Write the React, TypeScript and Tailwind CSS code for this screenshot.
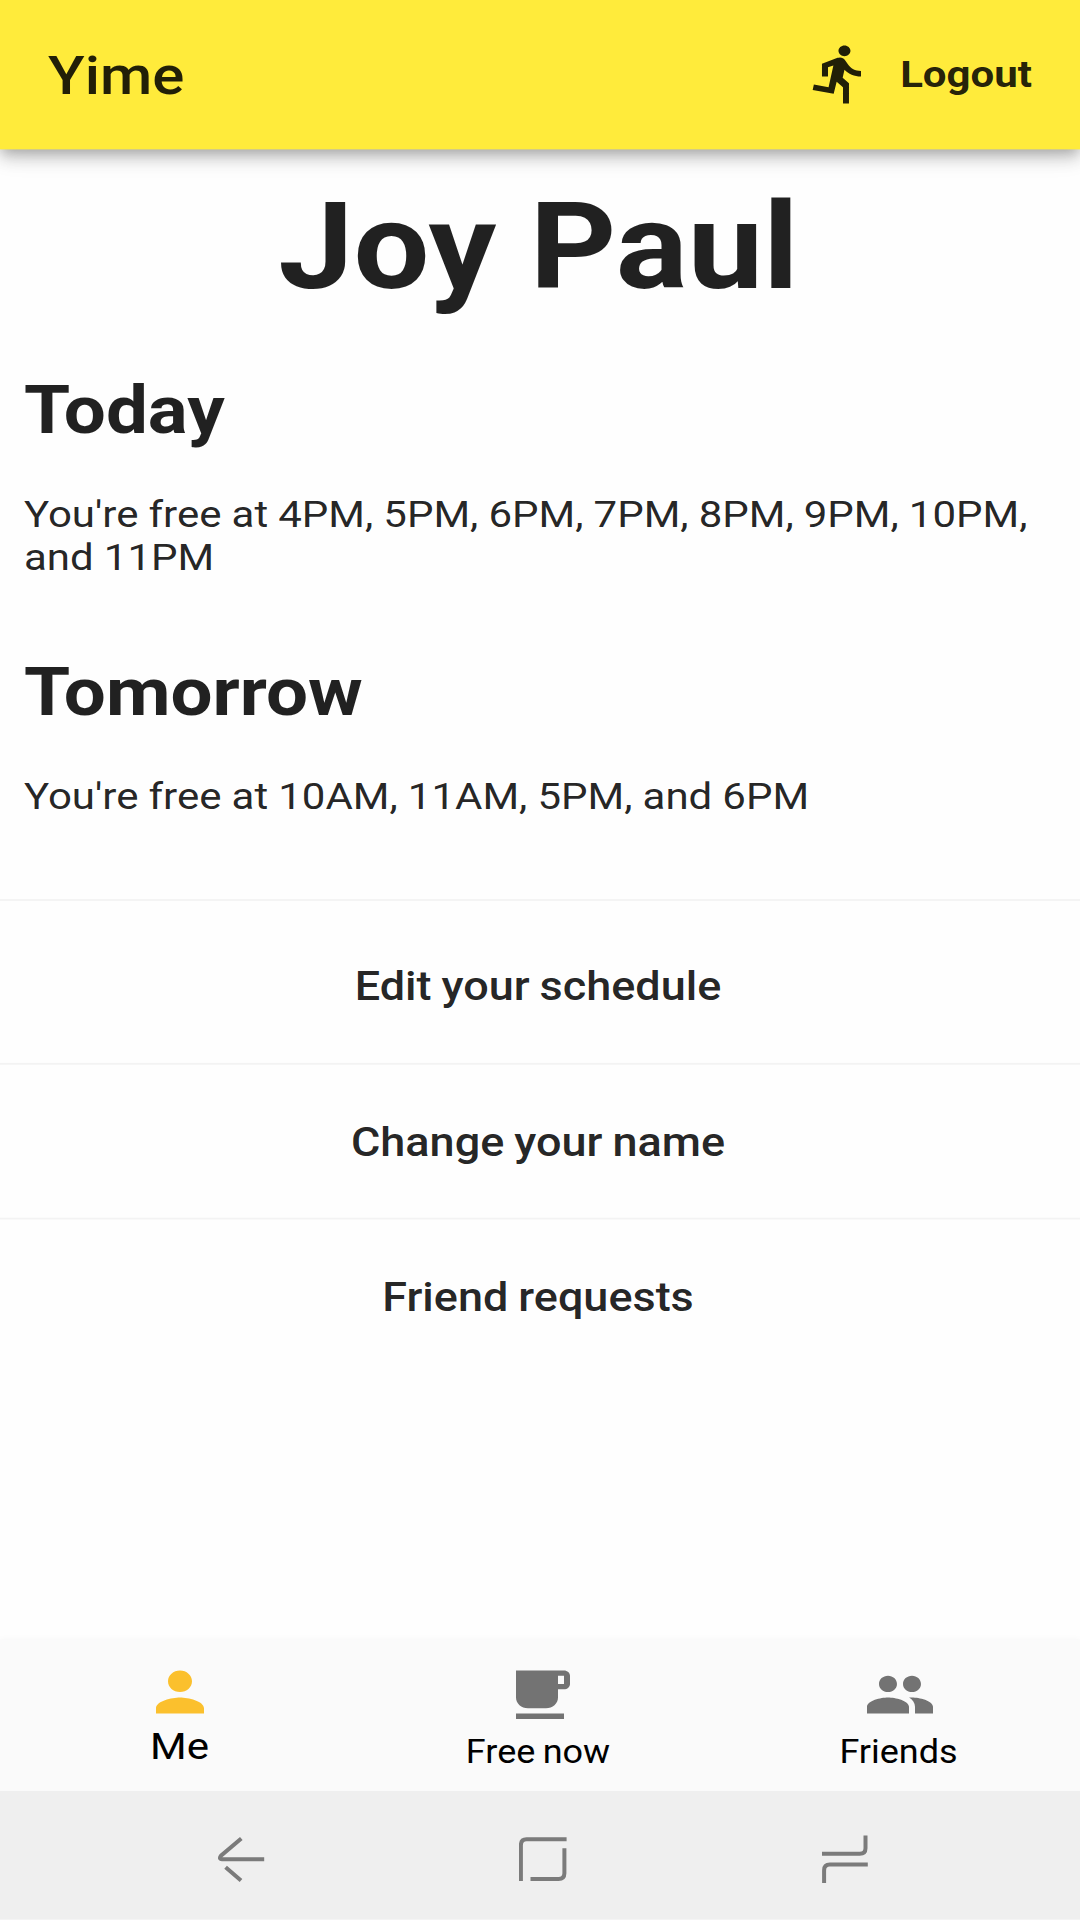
import type { ReactNode } from 'react';

function MaterialIcon({ d, className }: { d: string; className: string }) {
  return (
    <svg viewBox="0 0 24 24" fill="currentColor" className={className}>
      <path d={d} />
    </svg>
  );
}

const RUN =
  'M13.49 5.48c1.1 0 2-.9 2-2s-.9-2-2-2-2 .9-2 2 .9 2 2 2zm-3.6 13.9l1-4.4 2.1 2v6h2v-7.5l-2.1-2 .6-3c1.3 1.5 3.3 2.5 5.5 2.5v-2c-1.9 0-3.5-1-4.3-2.4l-1-1.6c-.4-.6-1-1-1.7-1-.3 0-.5.1-.8.1l-5.2 2.2v4.7h2v-3.4l1.8-.7-1.6 8.1-4.9-1-.4 2 7 1.4z';
const PERSON =
  'M12 12c2.21 0 4-1.79 4-4s-1.79-4-4-4-4 1.79-4 4 1.79 4 4 4zm0 2c-2.67 0-8 1.34-8 4v2h16v-2c0-2.66-5.33-4-8-4z';
const CUP =
  'M20 3H4v10c0 2.21 1.79 4 4 4h6c2.21 0 4-1.79 4-4v-3h2c1.11 0 2-.89 2-2V5c0-1.11-.89-2-2-2zm0 5h-2V5h2v3zM4 19h16v2H4z';
const PEOPLE =
  'M16 11c1.66 0 2.99-1.34 2.99-3S17.66 5 16 5c-1.66 0-3 1.34-3 3s1.34 3 3 3zm-8 0c1.66 0 2.99-1.34 2.99-3S9.66 5 8 5C6.34 5 5 6.34 5 8s1.34 3 3 3zm0 2c-2.33 0-7 1.17-7 3.5V19h14v-2.5c0-2.33-4.67-3.5-7-3.5zm8 0c-.29 0-.62.02-.97.05 1.16.84 1.97 1.97 1.97 3.45V19h6v-2.5c0-2.33-4.67-3.5-7-3.5z';

function SystemButton({ label, children }: { label: string; children: ReactNode }) {
  return (
    <button aria-label={label} className="h-[55.56px] w-[50px]">
      <svg
        viewBox="0 0 50 50"
        preserveAspectRatio="none"
        fill="none"
        stroke="currentColor"
        strokeWidth="4"
        className="h-full w-full"
      >
        {children}
      </svg>
    </button>
  );
}

function DayHeading({ children }: { children: ReactNode }) {
  return <h2 className="text-[74.5px] leading-[88px] font-bold">{children}</h2>;
}

function Availability({ children }: { children: ReactNode }) {
  return <p className="mt-[47.4px] text-[42px] leading-[47.6px] [word-spacing:-0.35px]">{children}</p>;
}

function Action({ label }: { label: string }) {
  return (
    <li className="flex h-[172.9px] items-center justify-center border-b-[2px] border-[#f3f3f3] pt-[1px] pr-[4px] text-[45px] font-medium [word-spacing:-1.2px] last:border-transparent">
      {label}
    </li>
  );
}

export default function App() {
  return (
    <div className="h-[1920px] w-[1080px] overflow-hidden bg-[#fefefe]">
      {/* The screen is laid out at 3x density and compressed vertically to fit the window. */}
      <div className="flex h-[2133.33px] w-[1080px] origin-top scale-y-[0.9] flex-col font-[Roboto,sans-serif] text-black/87">
        <header className="flex h-[165.6px] shrink-0 items-center justify-between bg-[#ffeb3b] px-12 shadow-[0_6px_12px_-3px_rgba(0,0,0,0.2),0_12px_15px_0_rgba(0,0,0,0.14),0_3px_30px_0_rgba(0,0,0,0.12)]">
          <span className="pt-[2px] text-[60px] font-medium">Yime</span>
          <button className="flex items-center gap-6 text-[42px] font-bold">
            <MaterialIcon d={RUN} className="-mt-[2px] size-[72px]" />
            Logout
          </button>
        </header>

        <main className="flex-1">
          <section className="px-6">
            <h1 className="mt-[28.8px] pr-[3px] text-center text-[134.6px] leading-[160px] font-bold">Joy Paul</h1>
            <div className="mt-[57.8px]">
              <DayHeading>Today</DayHeading>
              <Availability>You're free at 4PM, 5PM, 6PM, 7PM, 8PM, 9PM, 10PM, and 11PM</Availability>
            </div>
            <div className="mt-[82.4px]">
              <DayHeading>Tomorrow</DayHeading>
              <Availability>You're free at 10AM, 11AM, 5PM, and 6PM</Availability>
            </div>
          </section>
          <ul className="mt-[90.8px] border-t-[2px] border-[#f3f3f3] pt-[8.7px]">
            <Action label="Edit your schedule" />
            <Action label="Change your name" />
            <Action label="Friend requests" />
          </ul>
        </main>

        <nav className="grid h-[168.2px] shrink-0 grid-cols-3 bg-[#fafafa] text-black shadow-[0_0_8px_rgba(0,0,0,0.045)]">
          <a className="flex flex-col items-center pt-[21.4px]">
            <MaterialIcon d={PERSON} className="size-[72px] text-[#fbc02d]" />
            <span className="pr-[1px] text-[42px] leading-[48px]">Me</span>
          </a>
          <a className="flex flex-col items-center pt-[24.7px]">
            <MaterialIcon d={CUP} className="size-[72px] text-[#737373]" />
            <span className="mt-[6.7px] pr-[4px] text-[36px] leading-[42px] [word-spacing:-1.6px]">Free now</span>
          </a>
          <a className="flex flex-col items-center pt-[24.7px]">
            <MaterialIcon d={PEOPLE} className="size-[72px] text-[#737373]" />
            <span className="mt-[6.7px] pr-[3px] text-[36px] leading-[42px]">Friends</span>
          </a>
        </nav>

        <footer className="flex h-[142.9px] shrink-0 items-start justify-between bg-[#efefef] pt-[47.4px] pr-[210px] pl-[217px] text-[#7b7b7b]">
          <SystemButton label="Back">
            <path d="M24.3 4.2L4 21.5Q1.5 25 5 25H47.2M8.6 33L24 46.3" />
          </SystemButton>
          <SystemButton label="Home">
            <path d="M1.9 46.7V11Q1.9 5 7.5 5H47.6M11.5 44.7H39.5Q45.4 44.7 45.4 39V14" />
          </SystemButton>
          <SystemButton label="Recent apps">
            <path d="M2 19.5H39.8Q45.5 19.5 45.5 14V1.3M4.1 48.7V36Q4.1 30.3 9.8 30.3H47.8" />
          </SystemButton>
        </footer>
      </div>
    </div>
  );
}
